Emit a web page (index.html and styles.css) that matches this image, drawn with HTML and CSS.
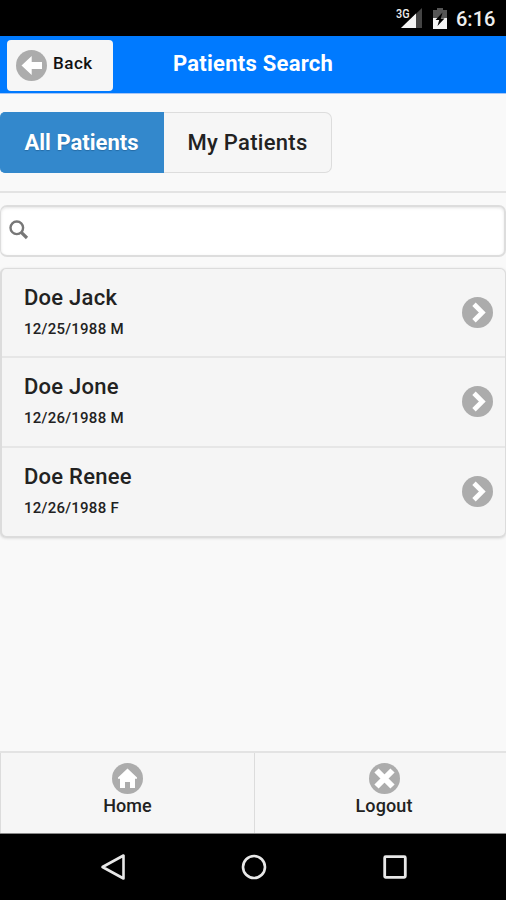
FILE: index.html
```html
<!DOCTYPE html>
<html lang="en">
<head>
<meta charset="utf-8">
<title>Patients Search</title>
<link rel="stylesheet" href="styles.css">
</head>
<body>
<div class="statusbar">
  <svg class="signal" width="28" height="24" viewBox="0 0 28 24">
    <path d="M5 23L26 3V23Z" fill="#444"/>
    <path d="M5 23L20 8.5V23Z" fill="#f4f4f4"/>
    <text class="network" x="0" y="12.5" textLength="13.5" lengthAdjust="spacingAndGlyphs">3G</text>
  </svg>
  <svg class="battery" width="14" height="21" viewBox="0 0 14 21">
    <path d="M4 0H10V2H14V11H0V2H4Z" fill="#555"/>
    <path d="M0 10H14V21H0Z" fill="#f4f4f4"/>
    <path d="M9.5 4.5L2.5 12H6.2L4.5 18L11.5 10.5H7.8Z" fill="#000"/>
  </svg>
  <span class="clock">6:16</span>
</div>
<header class="header">
  <a class="back">
    <svg width="31" height="31" viewBox="0 0 31 31"><circle cx="15.5" cy="15.5" r="15.5" fill="#acacac"/><path d="M5.5 15.5L15.7 6V12H26V19H15.7V25Z" fill="#fff"/></svg>
    <span>Back</span>
  </a>
  <h1 class="title">Patients Search</h1>
</header>
<main class="content">
  <nav class="tabs">
    <a class="tab active"><span>All Patients</span></a>
    <a class="tab"><span>My Patients</span></a>
  </nav>
  <div class="search">
    <svg width="20" height="20" viewBox="0 0 20 20"><circle cx="7.8" cy="7.8" r="6.3" fill="none" stroke="#777" stroke-width="2.4"/><path d="M12.3 12.3L18 18" stroke="#777" stroke-width="3.2"/></svg>
  </div>
  <ul class="list">
    <li class="row first">
      <div><h2 class="name">Doe Jack</h2><p class="info">12/25/1988 M</p></div>
      <svg width="31" height="31" viewBox="0 0 31 31"><circle cx="15.5" cy="15.5" r="15.5" fill="#acacac"/><path d="M12 7.2L20.3 15.5L12 23.8" fill="none" stroke="#fff" stroke-width="4.8"/></svg>
    </li>
    <li class="row">
      <div><h2 class="name">Doe Jone</h2><p class="info">12/26/1988 M</p></div>
      <svg width="31" height="31" viewBox="0 0 31 31"><circle cx="15.5" cy="15.5" r="15.5" fill="#acacac"/><path d="M12 7.2L20.3 15.5L12 23.8" fill="none" stroke="#fff" stroke-width="4.8"/></svg>
    </li>
    <li class="row">
      <div><h2 class="name">Doe Renee</h2><p class="info">12/26/1988 F</p></div>
      <svg width="31" height="31" viewBox="0 0 31 31"><circle cx="15.5" cy="15.5" r="15.5" fill="#acacac"/><path d="M12 7.2L20.3 15.5L12 23.8" fill="none" stroke="#fff" stroke-width="4.8"/></svg>
    </li>
  </ul>
</main>
<footer class="footer">
  <a class="action">
    <svg width="31" height="31" viewBox="0 0 31 31"><circle cx="15.5" cy="15.5" r="15.5" fill="#acacac"/><path d="M15.5 5.5L25 14.5V15.8H23V25H18V19H13V25H8V15.8H6V14.5Z" fill="#fff"/></svg>
    <span>Home</span>
  </a>
  <a class="action logout">
    <svg width="31" height="31" viewBox="0 0 31 31"><circle cx="15.5" cy="15.5" r="15.5" fill="#acacac"/><path d="M7.5 7.5L23.5 23.5M23.5 7.5L7.5 23.5" stroke="#fff" stroke-width="6"/></svg>
    <span>Logout</span>
  </a>
</footer>
<div class="navbar">
  <svg width="26" height="28" viewBox="0 0 26 28"><path d="M2.5 14L23.5 2.5V25.5Z" fill="none" stroke="#e8e8e8" stroke-width="2.6" stroke-linejoin="round"/></svg>
  <svg width="26" height="28" viewBox="0 0 26 28"><circle cx="13" cy="14" r="11" fill="none" stroke="#e8e8e8" stroke-width="2.6"/></svg>
  <svg width="26" height="28" viewBox="0 0 26 28"><rect x="2.7" y="3.7" width="20.6" height="20.6" rx="1" fill="none" stroke="#e8e8e8" stroke-width="2.8"/></svg>
</div>
</body>
</html>
```
FILE: styles.css
```css
* { box-sizing: border-box; }
body {
  margin: 0;
  height: 900px;
  display: flex;
  flex-direction: column;
  overflow: hidden;
  background: #f9f9f9;
  color: #222;
  font-family: Roboto, "Liberation Sans", sans-serif;
  font-weight: 500;
}
svg { display: block; flex: none; }
h1, h2, p, ul { margin: 0; padding: 0; }
.statusbar {
  height: 36px;
  flex: none;
  display: flex;
  align-items: flex-start;
  justify-content: flex-end;
  padding: 0 11px 0 0;
  background: #000;
  color: #eee;
}
.signal { margin: 5px 9px 0 0; overflow: visible; }
.network { font: 500 12.5px Roboto, sans-serif; fill: #eee; }
.battery { margin: 8px 9px 0 0; }
.clock { font-size: 20px; line-height: 24px; padding-top: 7px; width: 39px; }
.header {
  height: 58px;
  flex: none;
  display: grid;
  grid-template-columns: 106px 1fr 105px;
  padding: 4px 8px 0 7px;
  background: #007aff;
  border-bottom: 1px solid #a8c6f5;
}
.back {
  height: 51px;
  display: flex;
  align-items: center;
  gap: 7px;
  padding-left: 9px;
  border-radius: 4px;
  background: #f6f6f6;
  color: #111;
  font-size: 17px;
  line-height: 20px;
  letter-spacing: 0.5px;
}
.back span { margin: -5px 0 0 -1px; }
.title {
  text-align: center;
  color: #fff;
  font-size: 22px;
  line-height: 48px;
  font-weight: 700;
  letter-spacing: 0.25px;
}
.content { flex: 1; }
.tabs {
  height: 99px;
  padding-top: 18px;
  display: flex;
  border-bottom: 2px solid #e3e3e3;
}
.tab {
  width: 168px;
  height: 61px;
  border: 1px solid #ddd;
  border-left: 0;
  border-radius: 0 7px 7px 0;
  background: #f6f6f6;
  font-size: 22px;
  line-height: 59px;
  letter-spacing: 0.3px;
  text-align: center;
}
.tab.active {
  width: 164px;
  border-color: #3388cc;
  border-radius: 5px 0 0 5px;
  background: #3388cc;
  color: #fff;
  font-weight: 700;
  letter-spacing: 0;
  text-shadow: 0 1px 1px #256ba5;
}
.search {
  height: 52px;
  margin-top: 12px;
  padding: 15px 8px;
  border: 2px solid #ddd;
  border-left-width: 1px;
  border-radius: 7px;
  background: #fff;
  box-shadow: inset 0 1px 3px #e4e4e4;
}
.search svg { margin-top: -2px; }
.list {
  height: 269px;
  margin-top: 11px;
  border: 1px solid #dcdcdc;
  border-width: 1px 1px 1px 2px;
  border-radius: 6px;
  background: #f5f5f5;
  box-shadow: 0 1px 3px #ccc;
  list-style: none;
}
.row {
  height: 90px;
  display: flex;
  align-items: center;
  justify-content: space-between;
  padding: 0 12px 1px 22px;
  border-top: 2px solid #e6e6e6;
}
.row.first { height: 87px; border-top: 0; padding-bottom: 0; }
.name { font-size: 22px; line-height: 28px; font-weight: 500; letter-spacing: 0.25px; }
.info { font-size: 15px; line-height: 20px; margin: 7px 0 3px; letter-spacing: 0.25px; }
.footer {
  height: 83px;
  flex: none;
  display: grid;
  grid-template-columns: 254px 1fr;
  border-top: 2px solid #e3e3e3;
  border-bottom: 1px solid #888;
  background: #f6f6f6;
}
.action {
  display: flex;
  flex-direction: column;
  align-items: center;
  padding-top: 10px;
  border-left: 1px solid #dcdcdc;
  font-size: 18px;
  line-height: 22px;
  letter-spacing: 0.1px;
}
.logout { padding-left: 7px; }
.action span { margin-top: 1px; }
.navbar {
  height: 66px;
  flex: none;
  display: flex;
  justify-content: center;
  gap: 115px;
  padding: 19px 0 0 1px;
  background: #000;
}
```
